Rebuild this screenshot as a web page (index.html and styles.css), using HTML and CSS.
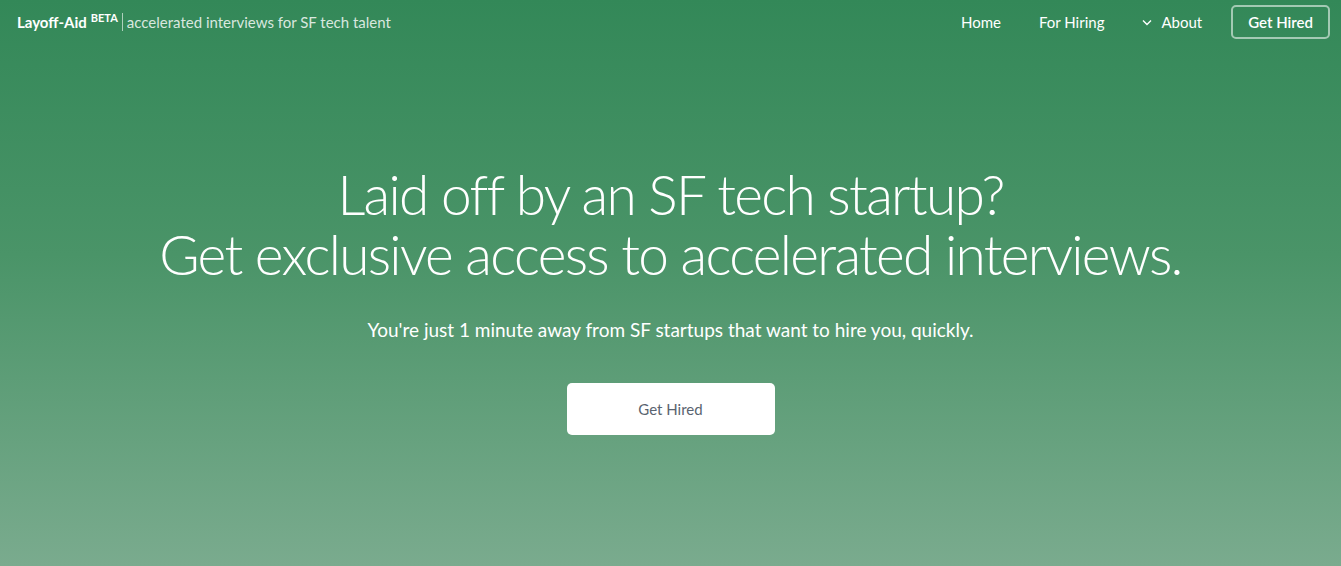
FILE: index.html
```html
<!DOCTYPE html>
<html lang="en">
<head>
<meta charset="utf-8">
<title>Layoff-Aid</title>
<link rel="stylesheet" href="styles.css">
</head>
<body>
<div class="page">
  <header class="nav">
    <div class="brand">
      <span class="brand-name">Layoff-Aid</span><sup class="beta">BETA</sup>
      <span class="sep"></span>
      <span class="tagline">accelerated interviews for SF tech talent</span>
    </div>
    <nav class="links">
      <a class="link" href="#">Home</a>
      <a class="link" href="#">For Hiring</a>
      <a class="link about" href="#"><svg class="chev" width="10" height="7" viewBox="0 0 10 7"><path d="M1 1.5 L5 5.5 L9 1.5" fill="none" stroke="currentColor" stroke-width="1.4"/></svg>About</a>
      <a class="btn-outline" href="#">Get Hired</a>
    </nav>
  </header>
  <main class="hero">
    <h1 class="title">Laid off by an SF tech startup?<br>Get exclusive access to accelerated interviews.</h1>
    <p class="sub">You're just 1 minute away from SF startups that want to hire you, quickly.</p>
    <a class="btn-white" href="#">Get Hired</a>
  </main>
</div>
</body>
</html>
```
FILE: styles.css
```css
* { box-sizing: border-box; }
html, body { margin: 0; padding: 0; }
body {
  font-family: Lato, "Open Sans", "Liberation Sans", sans-serif;
  color: #fff;
}
.page {
  height: 566px;
  background: linear-gradient(180deg, #338858 0%, #4a9468 45%, #7aab8e 100%);
  display: flex;
  flex-direction: column;
}
.nav {
  display: flex;
  justify-content: space-between;
  align-items: center;
  height: 44px;
  padding: 0 11px 0 17px;
}
.brand {
  display: flex;
  align-items: center;
  font-size: 15px;
}
.brand-name { font-weight: 700; }
.beta {
  font-size: 11px;
  font-weight: 700;
  margin-left: 4px;
  align-self: flex-start;
  margin-top: -2px;
}
.sep {
  width: 1px;
  height: 18px;
  background: rgba(255,255,255,0.6);
  margin: 0 4px 0 4px;
}
.tagline { color: rgba(255,255,255,0.82); }
.links {
  display: flex;
  align-items: center;
  font-size: 15px;
}
.link {
  color: #fff;
  text-decoration: none;
  margin-right: 38px;
}
.about { display: flex; align-items: center; margin-right: 29px; }
.chev { margin-right: 9px; }
.btn-outline {
  color: #fff;
  text-decoration: none;
  font-weight: 600;
  border: 2px solid rgba(255,255,255,0.55);
  border-radius: 5px;
  padding: 6px 15px;
}
.hero {
  display: flex;
  flex-direction: column;
  align-items: center;
  text-align: center;
  padding-top: 120px;
}
.title {
  margin: 0;
  font-weight: 300;
  font-size: 55px;
  line-height: 60px;
  letter-spacing: -1.7px;
}
.sub {
  margin: 34px 0 0;
  font-size: 19px;
  font-weight: 400;
}
.btn-white {
  margin-top: 42px;
  width: 208px;
  height: 52px;
  display: flex;
  align-items: center;
  justify-content: center;
  background: #fff;
  color: #5a6470;
  text-decoration: none;
  font-size: 15px;
  border-radius: 5px;
}
```
